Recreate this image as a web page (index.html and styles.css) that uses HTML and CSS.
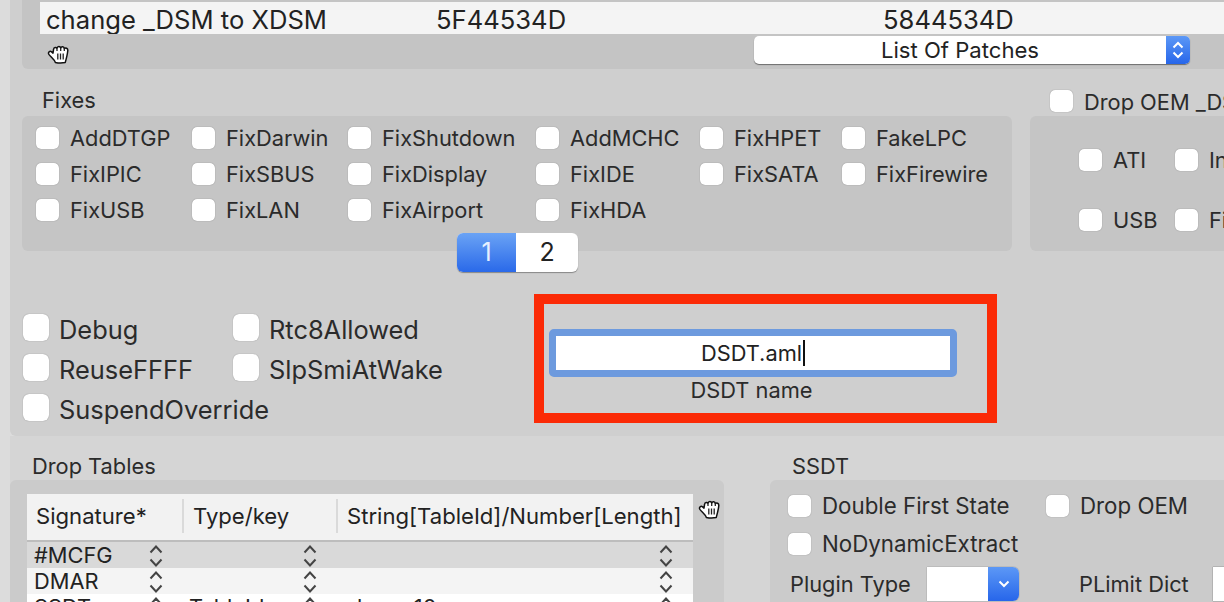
FILE: index.html
```html
<!DOCTYPE html>
<html lang="en">
<head>
<meta charset="utf-8">
<title>Clover Configurator - Acpi</title>
<link rel="stylesheet" href="styles.css">
</head>
<body>
<svg class="defs" width="0" height="0" aria-hidden="true">
  <symbol id="hand" viewBox="0 0 24 19">
    <path d="M6.6 4.2C6.8 2 9.4 1.9 10 3.4C10.5 1 13.2 1 13.7 3.1C14.4 1.2 17 1.5 17.3 3.6C18.6 2.4 21 3.2 20.8 5.5C20.5 9 19.5 13 18.2 17.6C15 18.2 11.5 18.2 8.4 17.4C7.4 14.4 3.8 12 1.9 9.4C0.6 7.4 2.9 5.4 4.6 6.9L6 8.1Z" fill="#fff" stroke="#111" stroke-width="1.5" stroke-linejoin="round"/>
    <path d="M10 3.4V6M13.7 3.1V6M17.3 3.6V6M10.8 8.5V14.5M13.5 8.5V14.5M16.2 8.5V14.5" fill="none" stroke="#222" stroke-width="1.3"/>
  </symbol>
  <symbol id="stepper" viewBox="0 0 14 24">
    <path d="M1.5 8.5L7 2.5L12.5 8.5M1.5 15.5L7 21.5L12.5 15.5" fill="none" stroke="#444" stroke-width="2"/>
  </symbol>
</svg>
<main class="window">
  <section class="upper">
    <div class="patches">
      <div class="patch-row">
        <span>change _DSM to XDSM</span>
        <span>5F44534D</span>
        <span>5844534D</span>
      </div>
      <div class="patch-tools">
        <svg class="hand hand-top"><use href="#hand"/></svg>
        <div class="popup">
          <span class="popup-text">List Of Patches</span>
          <span class="popup-arrows">
            <svg width="14" height="20" viewBox="0 0 14 20"><path d="M2.5 7.5L7 3L11.5 7.5M2.5 12.5L7 17L11.5 12.5" fill="none" stroke="#fff" stroke-width="2"/></svg>
          </span>
        </div>
      </div>
    </div>

    <div class="fix-row">
      <div class="fixes">
        <h2 class="heading heading-fixes">Fixes</h2>
        <div class="box fix-box">
          <div class="fix-grid">
            <label class="check"><i class="cb"></i>AddDTGP</label>
            <label class="check"><i class="cb"></i>FixDarwin</label>
            <label class="check"><i class="cb"></i>FixShutdown</label>
            <label class="check"><i class="cb"></i>AddMCHC</label>
            <label class="check"><i class="cb"></i>FixHPET</label>
            <label class="check"><i class="cb"></i>FakeLPC</label>
            <label class="check"><i class="cb"></i>FixIPIC</label>
            <label class="check"><i class="cb"></i>FixSBUS</label>
            <label class="check"><i class="cb"></i>FixDisplay</label>
            <label class="check"><i class="cb"></i>FixIDE</label>
            <label class="check"><i class="cb"></i>FixSATA</label>
            <label class="check"><i class="cb"></i>FixFirewire</label>
            <label class="check"><i class="cb"></i>FixUSB</label>
            <label class="check"><i class="cb"></i>FixLAN</label>
            <label class="check"><i class="cb"></i>FixAirport</label>
            <label class="check"><i class="cb"></i>FixHDA</label>
          </div>
          <div class="pager">
            <span class="page page-on">1</span>
            <span class="page">2</span>
          </div>
        </div>
      </div>
      <div class="drop-oem">
        <label class="check heading-check"><i class="cb"></i>Drop OEM _DSM</label>
        <div class="box oem-box">
          <div class="oem-grid">
            <label class="check"><i class="cb"></i>ATI</label>
            <label class="check"><i class="cb"></i>Intel</label>
            <label class="check"><i class="cb"></i>USB</label>
            <label class="check"><i class="cb"></i>Firewire</label>
          </div>
        </div>
      </div>
    </div>

    <div class="option-row">
      <div class="options">
        <label class="check big"><i class="cb cb-big"></i>Debug</label>
        <label class="check big"><i class="cb cb-big"></i>Rtc8Allowed</label>
        <label class="check big"><i class="cb cb-big"></i>ReuseFFFF</label>
        <label class="check big"><i class="cb cb-big"></i>SlpSmiAtWake</label>
        <label class="check big"><i class="cb cb-big"></i>SuspendOverride</label>
      </div>
      <div class="callout">
        <div class="name-field"><span class="name-value">DSDT.aml</span><span class="caret"></span></div>
        <div class="name-label">DSDT name</div>
      </div>
    </div>
  </section>

  <section class="lower">
    <div class="drop">
      <h2 class="heading heading-drop">Drop Tables</h2>
      <div class="box drop-box">
        <div class="table">
          <div class="thead">
            <span class="th">Signature*</span>
            <span class="th">Type/key</span>
            <span class="th">String[TableId]/Number[Length]</span>
          </div>
          <div class="tr tr-sel">
            <span class="td">#MCFG<svg class="stepper"><use href="#stepper"/></svg></span>
            <span class="td"><svg class="stepper"><use href="#stepper"/></svg></span>
            <span class="td td-last"><svg class="stepper"><use href="#stepper"/></svg></span>
          </div>
          <div class="tr tr-alt">
            <span class="td">DMAR<svg class="stepper"><use href="#stepper"/></svg></span>
            <span class="td"><svg class="stepper"><use href="#stepper"/></svg></span>
            <span class="td td-last"><svg class="stepper"><use href="#stepper"/></svg></span>
          </div>
          <div class="tr">
            <span class="td">SSDT<svg class="stepper"><use href="#stepper"/></svg></span>
            <span class="td">TableId<svg class="stepper"><use href="#stepper"/></svg></span>
            <span class="td td-last">xh_rvp10<svg class="stepper"><use href="#stepper"/></svg></span>
          </div>
        </div>
        <svg class="hand hand-table"><use href="#hand"/></svg>
      </div>
    </div>
    <div class="ssdt">
      <h2 class="heading heading-ssdt">SSDT</h2>
      <div class="box ssdt-box">
        <div class="ssdt-row">
          <label class="check mid mid-wide"><i class="cb"></i>Double First State</label>
          <label class="check mid"><i class="cb"></i>Drop OEM</label>
        </div>
        <div class="ssdt-row">
          <label class="check mid"><i class="cb"></i>NoDynamicExtract</label>
        </div>
        <div class="ssdt-row ssdt-fields">
          <span class="field-label field-plugin">Plugin Type</span>
          <div class="combo">
            <span class="combo-arrow">
              <svg width="14" height="10" viewBox="0 0 14 10"><path d="M2.5 2.5L7 7L11.5 2.5" fill="none" stroke="#fff" stroke-width="2"/></svg>
            </span>
          </div>
          <span class="field-label field-plimit">PLimit Dict</span>
          <div class="text-field"></div>
        </div>
      </div>
    </div>
  </section>
</main>
</body>
</html>
```

FILE: styles.css
```css
* { box-sizing: border-box; }

html, body {
  margin: 0;
  width: 1224px;
  height: 602px;
  overflow: hidden;
}

body {
  font-family: Inter, "Liberation Sans", Arial, sans-serif;
  font-size: 21.8px;
  color: #2b2b2b;
  background: #dcdcdc;
}

.defs { position: absolute; }

.window {
  width: 1224px;
  height: 602px;
  overflow: hidden;
}

/* Upper darker panel */
.upper {
  width: 1300px;
  height: 436px;
  margin-left: 10px;
  padding: 0 0 0 12px;
  background: #cfcfcf;
  border-radius: 0 0 0 6px;
}

.patches {
  height: 69px;
  padding: 2px 0 0 18px;
  background: #c4c4c4;
  border-radius: 0 0 0 6px;
}

.patch-row {
  display: grid;
  grid-template-columns: 390px 447px 1fr;
  align-items: center;
  height: 32px;
  padding-left: 6px;
  background: #f4f4f4;
  font-size: 25.6px;
  line-height: 36px;
  white-space: nowrap;
  color: #222;
  overflow: hidden;
}

.patch-tools {
  display: flex;
  align-items: flex-start;
  padding-top: 2px;
}

.hand { display: block; width: 24px; height: 19px; }
.hand-top { margin: 9px 0 0 7px; }

.popup {
  display: flex;
  width: 436px;
  height: 28px;
  margin-left: 683px;
  background: #fff;
  border-radius: 5px;
  box-shadow: 0 1px 1px rgba(0, 0, 0, 0.45);
  overflow: hidden;
}

.popup-text {
  flex: 1;
  text-align: center;
  font-size: 22.1px;
  line-height: 29px;
  color: #222;
}

.popup-arrows {
  display: flex;
  align-items: center;
  justify-content: center;
  width: 24px;
  background: linear-gradient(#5c98f6, #2766ea);
}

/* Fixes */
.fix-row { display: flex; }

.heading {
  margin: 0;
  font-weight: 400;
  font-size: 21.8px;
  line-height: 26px;
}

.fixes { flex: none; width: 990px; }

.heading-fixes {
  height: 47px;
  padding: 18px 0 0 20px;
}

.box { background: #c5c5c5; border-radius: 6px; }

.fix-box {
  position: relative;
  height: 135px;
  padding: 11px 0 0 14px;
}

.fix-grid {
  display: grid;
  grid-template-columns: 156px 156px 188px 164px 142px auto;
  grid-auto-rows: 36px;
}

.check {
  display: flex;
  align-items: flex-start;
  gap: 11px;
  line-height: 22px;
  white-space: nowrap;
}

.cb {
  flex: none;
  display: block;
  width: 23px;
  height: 22px;
  background: #fff;
  border-radius: 5px;
  box-shadow: 0 0 1px rgba(0, 0, 0, 0.45);
}

.pager {
  position: absolute;
  left: 435px;
  top: 117px;
  display: flex;
  width: 121px;
  height: 39px;
  background: #fff;
  border-radius: 6px;
  box-shadow: 0 1px 1px rgba(0, 0, 0, 0.35);
  overflow: hidden;
  font-size: 25px;
  line-height: 39px;
  text-align: center;
  color: #222;
}

.page { flex: 1; }

.page-on {
  flex: none;
  width: 59px;
  background: linear-gradient(#6aa3f5, #2a69e9);
  color: #e6f0ff;
}

.drop-oem {
  flex: none;
  width: 300px;
  margin-left: 18px;
}

.heading-check {
  height: 47px;
  padding: 21px 0 0 20px;
  line-height: 25px;
}

.oem-box {
  height: 135px;
  padding: 33px 0 0 49px;
}

.oem-grid {
  display: grid;
  grid-template-columns: 96px 96px;
  grid-auto-rows: 60px;
}

/* Options and callout */
.option-row { display: flex; align-items: flex-start; }

.options {
  flex: none;
  width: 511px;
  margin: 63px 0 0 1px;
  display: grid;
  grid-template-columns: 210px auto;
  grid-auto-rows: 40px;
  justify-content: start;
}

.big {
  gap: 10px;
  font-size: 25.4px;
  line-height: 32px;
}

.cb-big {
  width: 26px;
  height: 27px;
  border-radius: 6px;
}

.callout {
  flex: none;
  width: 463px;
  height: 129px;
  margin-top: 43px;
  padding: 25px 0 0 5px;
  border: 10px solid #fb2a06;
}

.name-field {
  display: flex;
  align-items: center;
  justify-content: center;
  width: 408px;
  height: 48px;
  background: #fff;
  border: 7px solid #6d9ade;
  border-radius: 5px;
  color: #222;
}

.caret {
  width: 2px;
  height: 26px;
  margin-left: 1px;
  background: #111;
}

.name-label {
  width: 405px;
  text-align: center;
  line-height: 27px;
}

/* Lower area */
.lower {
  display: flex;
  width: 1300px;
  height: 166px;
  margin-left: 10px;
  background: #d5d5d5;
}

.drop { flex: none; width: 714px; }

.heading-drop {
  height: 44px;
  padding: 17px 0 0 22px;
}

.drop-box {
  display: flex;
  align-items: flex-start;
  gap: 5px;
  height: 130px;
  padding: 14px 0 0 17px;
  background: #cbcbcb;
}

.table {
  flex: none;
  width: 666px;
  background: #fff;
}

.thead {
  display: grid;
  grid-template-columns: 155px 154px 357px;
  align-items: center;
  height: 48px;
  padding-bottom: 2px;
  background: #f2f2f2;
  border-bottom: 2px solid #bdbdbd;
  font-size: 22.1px;
  color: #222;
}

.th {
  height: 34px;
  line-height: 35px;
  padding-left: 9px;
  white-space: nowrap;
  border-left: 2px solid #dadada;
}

.th:first-child { padding-left: 9px; border-left: 0; }

.tr {
  display: grid;
  grid-template-columns: 155px 154px 357px;
  height: 26px;
  color: #222;
}

.tr-sel { background: #d9d9d9; }
.tr-alt { background: #f4f4f4; }

.td {
  display: flex;
  align-items: center;
  justify-content: space-between;
  padding: 0 19px 0 7px;
  line-height: 27px;
}

.td-last { padding-left: 9px; padding-right: 20px; }

.td .stepper:only-child { margin-left: auto; }

.stepper { flex: none; width: 14px; height: 24px; }

.hand-table { margin-top: 6px; }

.ssdt {
  flex: none;
  width: 500px;
  margin-left: 46px;
}

.heading-ssdt {
  height: 44px;
  padding: 17px 0 0 22px;
}

.ssdt-box {
  height: 130px;
  padding: 15px 0 0 18px;
  background: #cbcbcb;
}

.ssdt-row {
  display: flex;
  margin-bottom: 16px;
}

.mid {
  font-size: 22.3px;
  line-height: 22px;
}

.mid-wide { width: 258px; }

.ssdt-fields {
  align-items: center;
  margin: -5px 0 0;
}

.field-label { flex: none; font-size: 21.8px; line-height: 36px; white-space: nowrap; }
.field-plugin { width: 137px; margin-left: 2px; }
.field-plimit { width: 134px; margin-left: 60px; }

.combo {
  display: flex;
  justify-content: flex-end;
  flex: none;
  width: 92px;
  height: 34px;
  background: #fff;
  border-radius: 0 6px 6px 0;
  box-shadow: 0 0 1px rgba(0, 0, 0, 0.7);
  overflow: hidden;
}

.combo-arrow {
  display: flex;
  align-items: center;
  justify-content: center;
  width: 31px;
  background: linear-gradient(#5c98f6, #2766ea);
}

.text-field {
  flex: none;
  width: 60px;
  height: 34px;
  background: #fff;
  box-shadow: 0 0 1px rgba(0, 0, 0, 0.7);
}
```
